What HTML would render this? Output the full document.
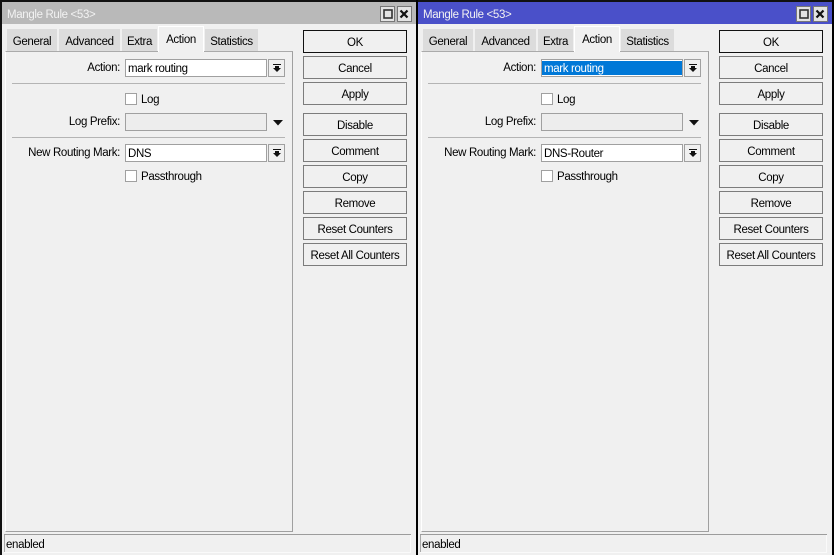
<!DOCTYPE html>
<html><head><meta charset="utf-8">
<style>
html,body{margin:0;padding:0;background:#000}
body{width:834px;height:555px;position:relative;overflow:hidden;font:11.5px "Liberation Sans",sans-serif;letter-spacing:-.35px;color:#000}
.win{position:absolute;top:0;height:555px;width:416px;background:#f0f0f0;overflow:hidden}
.win div,.win svg{position:absolute}
.top{left:0;top:0;width:416px;height:2px;background:#111}
.lb{left:0;top:0;width:2px;height:555px;background:#111}
.title{left:2px;top:2px;width:414px;height:22px;background:#b9b9b9}
.blue .title{background:#4a50c9}
.tt{left:7px;top:8px;color:#f2f2f2;line-height:15px;white-space:nowrap}
.wb{top:6px;width:13px;height:14px;border:1px solid #777;background:#e3e3e3}
.tab{top:29px;height:22px;background:#dcdcdc;line-height:26px;text-align:center;white-space:nowrap}
.tab.a{top:26px;height:26px;background:#f0f0f0;line-height:26px;border:1px solid #fff;border-bottom:0;box-sizing:border-box;z-index:2}
.pane{left:5px;top:51px;width:286px;height:479px;border-top:1px solid #aaa;border-right:1px solid #a0a0a0;border-bottom:1px solid #a0a0a0;border-left:1px solid #fff}
.lab{text-align:right;white-space:nowrap;line-height:19px}
.inp{left:125px;width:138px;height:16px;background:#fff;border:1px solid #a0a0a0;line-height:18px;white-space:nowrap;padding-left:2px}
.dis{background:#ededed}
.dd{left:268px;width:15px;height:16px;border:1px solid #a0a0a0;background:#f0f0f0}
.sep{left:12px;width:273px;height:1px;background:#b4b4b4}
.cb{left:125px;width:10px;height:10px;background:#fff;border:1px solid #a0a0a0}
.cl{left:141px;line-height:17px;white-space:nowrap}
.btn{left:303px;width:102px;height:21px;border:1px solid #7c7c7c;text-align:center;line-height:24px;white-space:nowrap;background:#f0f0f0}
.ok{border-color:#111}
.sl{left:4px;top:534px;width:407px;height:1px;background:#9c9c9c}
.sb{left:4px;top:535px;width:1px;height:18px;background:#a8a8a8}
.sr{left:410px;top:535px;width:1px;height:18px;background:#fafafa}
.sbb{left:4px;top:552px;width:407px;height:1px;background:#fafafa}
.st{left:6px;top:537px;line-height:17px}
.sel{left:126px;width:140px;height:14px;background:#0078d7;top:61px}
</style></head><body>

<div class="win" style="left:0">
<div class="top"></div><div class="lb"></div>
<div class="title"></div><div class="tt">Mangle Rule &lt;53&gt;</div>
<div class="wb" style="left:380px"></div>
<svg style="left:383px;top:9px" width="10" height="10"><rect x="1" y="1" width="8" height="8" fill="none" stroke="#333" stroke-width="1.6"/></svg>
<div class="wb" style="left:397px"></div>
<svg style="left:399px;top:9px" width="10" height="10"><path d="M1.5 1.5L8.5 8.5M8.5 1.5L1.5 8.5" stroke="#111" stroke-width="2.2"/></svg>
<div class="tab" style="left:7px;width:50px">General</div>
<div class="tab" style="left:59px;width:61px">Advanced</div>
<div class="tab" style="left:122px;width:35px">Extra</div>
<div class="tab a" style="left:158px;width:46px">Action</div>
<div class="tab" style="left:205px;width:53px">Statistics</div>
<div class="pane"></div>

<div class="lab" style="right:296px;top:59px">Action:</div>
<div class="inp" style="top:59px">mark routing</div>
<div class="dd" style="top:59px"></div>
<svg style="left:273px;top:64px" width="8" height="8"><path d="M0 0H8V1H0ZM2 2H6V4H8L4 8L0 4H2Z" fill="#111"/></svg>
<div class="sep" style="top:83px"></div>
<div class="cb" style="top:93px"></div><div class="cl" style="top:92px">Log</div>
<div class="lab" style="right:296px;top:113px">Log Prefix:</div>
<div class="inp dis" style="top:113px"></div>
<svg style="left:273px;top:120px" width="10" height="6"><path d="M0 0H10L5 5.5Z" fill="#111"/></svg>
<div class="sep" style="top:137px"></div>
<div class="lab" style="right:296px;top:144px">New Routing Mark:</div>
<div class="inp" style="top:144px">DNS</div>
<div class="dd" style="top:144px"></div>
<svg style="left:273px;top:149px" width="8" height="8"><path d="M0 0H8V1H0ZM2 2H6V4H8L4 8L0 4H2Z" fill="#111"/></svg>
<div class="cb" style="top:170px"></div><div class="cl" style="top:169px">Passthrough</div>

<div class="btn ok" style="top:30px">OK</div>
<div class="btn" style="top:56px">Cancel</div>
<div class="btn" style="top:82px">Apply</div>
<div class="btn" style="top:113px">Disable</div>
<div class="btn" style="top:139px">Comment</div>
<div class="btn" style="top:165px">Copy</div>
<div class="btn" style="top:191px">Remove</div>
<div class="btn" style="top:217px">Reset Counters</div>
<div class="btn" style="top:243px">Reset All Counters</div>

<div class="sl"></div><div class="sb"></div><div class="sr"></div><div class="sbb"></div>
<div class="st">enabled</div>
</div>

<div class="win blue" style="left:416px;width:416px">
<div class="top"></div><div class="lb" style="background:#000"></div>
<div class="title"></div><div class="tt">Mangle Rule &lt;53&gt;</div>
<div class="wb" style="left:380px"></div>
<svg style="left:383px;top:9px" width="10" height="10"><rect x="1" y="1" width="8" height="8" fill="none" stroke="#333" stroke-width="1.6"/></svg>
<div class="wb" style="left:397px"></div>
<svg style="left:399px;top:9px" width="10" height="10"><path d="M1.5 1.5L8.5 8.5M8.5 1.5L1.5 8.5" stroke="#111" stroke-width="2.2"/></svg>
<div class="tab" style="left:7px;width:50px">General</div>
<div class="tab" style="left:59px;width:61px">Advanced</div>
<div class="tab" style="left:122px;width:35px">Extra</div>
<div class="tab a" style="left:158px;width:46px">Action</div>
<div class="tab" style="left:205px;width:53px">Statistics</div>
<div class="pane"></div>

<div class="lab" style="right:296px;top:59px">Action:</div>
<div class="inp" style="top:59px"></div>
<div class="sel"></div>
<div style="left:128px;top:60px;line-height:18px;color:#fff;white-space:nowrap">mark routing</div>
<div class="dd" style="top:59px"></div>
<svg style="left:273px;top:64px" width="8" height="8"><path d="M0 0H8V1H0ZM2 2H6V4H8L4 8L0 4H2Z" fill="#111"/></svg>
<div class="sep" style="top:83px"></div>
<div class="cb" style="top:93px"></div><div class="cl" style="top:92px">Log</div>
<div class="lab" style="right:296px;top:113px">Log Prefix:</div>
<div class="inp dis" style="top:113px"></div>
<svg style="left:273px;top:120px" width="10" height="6"><path d="M0 0H10L5 5.5Z" fill="#111"/></svg>
<div class="sep" style="top:137px"></div>
<div class="lab" style="right:296px;top:144px">New Routing Mark:</div>
<div class="inp" style="top:144px">DNS-Router</div>
<div class="dd" style="top:144px"></div>
<svg style="left:273px;top:149px" width="8" height="8"><path d="M0 0H8V1H0ZM2 2H6V4H8L4 8L0 4H2Z" fill="#111"/></svg>
<div class="cb" style="top:170px"></div><div class="cl" style="top:169px">Passthrough</div>

<div class="btn ok" style="top:30px">OK</div>
<div class="btn" style="top:56px">Cancel</div>
<div class="btn" style="top:82px">Apply</div>
<div class="btn" style="top:113px">Disable</div>
<div class="btn" style="top:139px">Comment</div>
<div class="btn" style="top:165px">Copy</div>
<div class="btn" style="top:191px">Remove</div>
<div class="btn" style="top:217px">Reset Counters</div>
<div class="btn" style="top:243px">Reset All Counters</div>

<div class="sl"></div><div class="sb"></div><div class="sr"></div><div class="sbb"></div>
<div class="st">enabled</div>
</div>
</body></html>
